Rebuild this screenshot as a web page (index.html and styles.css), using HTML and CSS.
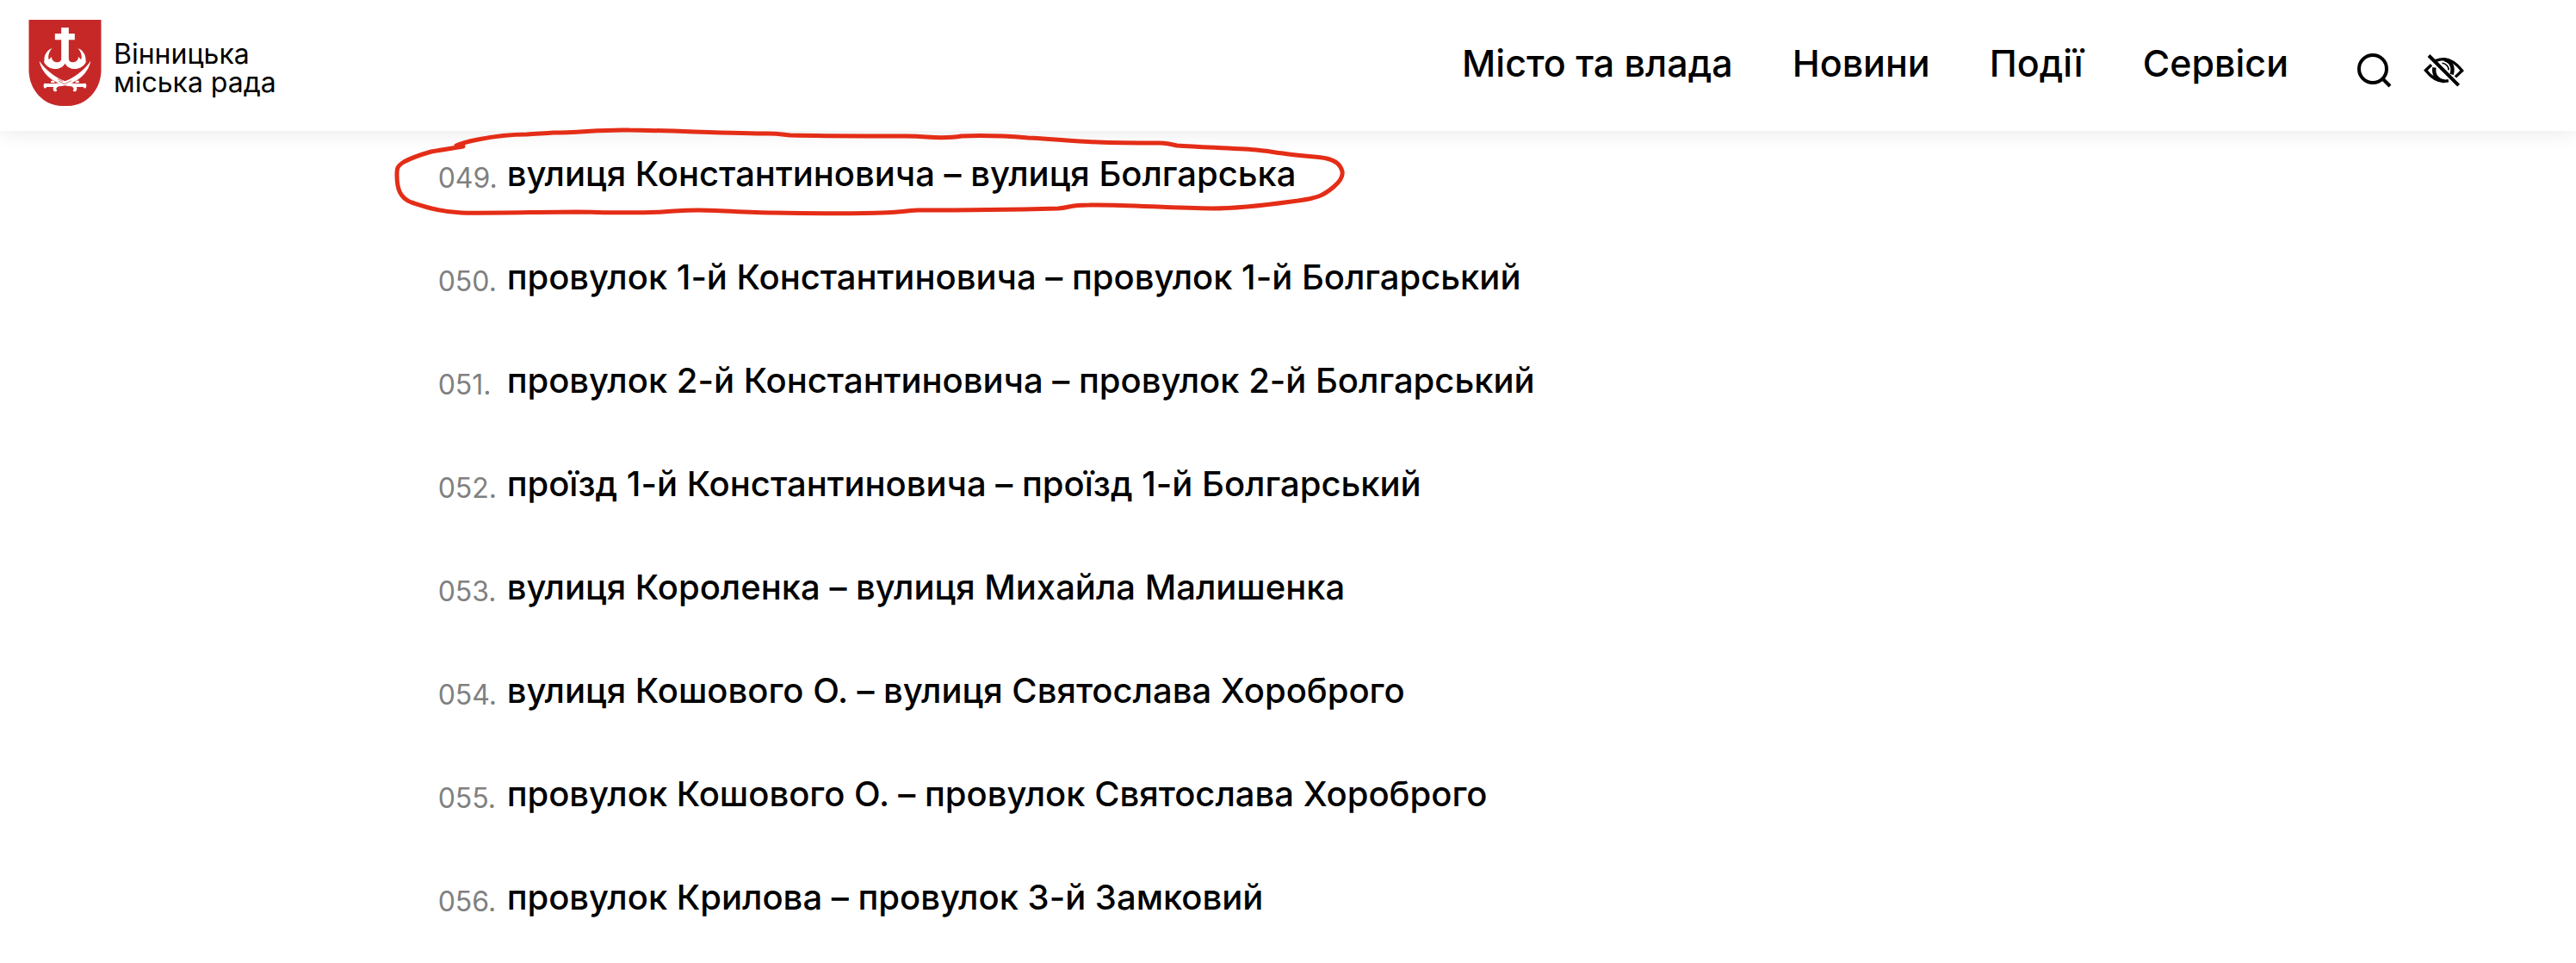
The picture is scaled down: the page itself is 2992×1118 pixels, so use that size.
FILE: index.html
```html
<!DOCTYPE html>
<html lang="uk">
<head>
<meta charset="utf-8">
<meta name="viewport" content="width=device-width, initial-scale=1">
<title>Вінницька міська рада</title>
<link rel="stylesheet" href="styles.css">
</head>
<body>
<header class="header">
  <a class="brand" href="#">
    <svg class="brand-shield" viewBox="40 24 252 300" aria-hidden="true">
      <path fill="#c62828" d="M40 24H292V199C292 270 238 324 178 324H154C94 324 40 270 40 199Z"/>
      <g fill="#fff">
        <path d="M153 51H179V72H200V94H179V160C179 168 185 172 192 172C205 171 214 163 212 152L222 163C227 150 221 134 211 123C230 130 239 148 238 163L239 172C231 187 217 194 204 195C186 196 172 188 166 176C160 188 146 196 128 195C115 194 101 187 93 172L94 163C93 148 102 130 121 123C111 134 105 150 110 163L120 152C118 163 127 171 140 172C147 172 153 168 153 160V94H131V72H153Z"/>
        <path d="M77 168C96 195 123 218 155 233C183 246 211 248 237 245C243 249 241 261 235 263L229 258L206 258C210 267 205 275 198 274C192 271 194 267 197 266C195 260 192 257 188 256C130 249 88 216 77 170Z"/>
        <path d="M255 168C236 195 209 218 177 233C149 246 121 248 95 245C89 249 91 261 97 263L103 258L126 258C122 267 127 275 134 274C140 271 138 267 135 266C137 260 140 257 144 256C202 249 244 216 255 170Z"/>
        <path d="M117 243C115 236 121 233 128 237L131 244ZM215 243C217 236 211 233 204 237L201 244Z"/>
      </g>
      <path fill="none" stroke="#c62828" stroke-width="2" d="M144 237L164 248L188 236M141 230L158 238"/>
    </svg>
    <span class="brand-name"><span>Вінницька</span><span>міська рада</span></span>
  </a>
  <div class="header-right">
    <nav class="nav">
      <a href="#">Місто та влада</a>
      <a href="#">Новини</a>
      <a href="#">Події</a>
      <a href="#">Сервіси</a>
    </nav>
    <div class="tools">
      <button class="tool" type="button" aria-label="Пошук">
        <svg viewBox="0 0 40 40"><g fill="none" stroke="#000" stroke-width="4"><circle cx="18" cy="18" r="16"/><path d="M29 29L38 38"/></g></svg>
      </button>
      <button class="tool tool-eye" type="button" aria-label="Версія для людей з порушенням зору">
        <svg viewBox="285 44 140 116"><g fill="none" stroke="#000"><path stroke-width="10" d="M312 82L292 101C314 128 335 139 355 139L371 137M323 69C334 65 345 62 355 62C380 63 400 79 418 102L395 124"/><path stroke-width="13" d="M322 91C318 117 332 134 357 139M357 64C381 70 390 91 382 115"/><path stroke-width="5" d="M349 76C364 77 373 90 371 100"/><path stroke-width="12" d="M303 50L406 153"/></g></svg>
      </button>
    </div>
  </div>
</header>
<main class="content">
  <ol class="streets">
    <li><span class="num">049.</span><span>вулиця Константиновича – вулиця Болгарська</span>
      <svg class="mark" viewBox="456 146 1108 108" aria-hidden="true"><path d="M530 169L538 170C532 171 519 173 501 176C487 180 478 183 469 188C461 193 461 196 461 203C461 218 464 230 478 235C494 240 511 246 536 247C555 248 635 246 670 246C710 247 750 247 769 246C787 245 793 244 811 244C835 244 867 247 899 247C935 248 985 248 1025 247C1044 247 1048 245 1066 244C1100 244 1190 243 1229 242C1243 241 1241 238 1265 238C1305 237 1361 242 1408 242C1441 242 1471 238 1500 234C1532 230 1537 227 1549 217C1556 211 1560 204 1559 199C1557 191 1552 187 1541 184C1524 181 1507 181 1490 178C1475 176 1469 175 1459 174C1431 172 1399 171 1367 169C1359 167 1354 166 1347 166C1325 166 1298 166 1275 165C1247 164 1218 161 1194 160C1169 158 1142 157 1117 158C1105 160 1090 160 1076 159C1064 158 1059 158 1051 158C1010 158 959 158 918 157C908 156 904 155 892 155C856 155 763 151 731 151C700 150 673 154 643 154C629 155 621 155 612 156C599 156 575 158 555 162C540 165 534 167 530 169"/></svg>
    </li>
    <li><span class="num">050.</span><span>провулок 1-й Константиновича – провулок 1-й Болгарський</span></li>
    <li><span class="num">051.</span><span>провулок 2-й Константиновича – провулок 2-й Болгарський</span></li>
    <li><span class="num">052.</span><span>проїзд 1-й Константиновича – проїзд 1-й Болгарський</span></li>
    <li><span class="num">053.</span><span>вулиця Короленка – вулиця Михайла Малишенка</span></li>
    <li><span class="num">054.</span><span>вулиця Кошового О. – вулиця Святослава Хороброго</span></li>
    <li><span class="num">055.</span><span>провулок Кошового О. – провулок Святослава Хороброго</span></li>
    <li><span class="num">056.</span><span>провулок Крилова – провулок 3-й Замковий</span></li>
  </ol>
</main>
</body>
</html>
```
FILE: styles.css
```css
* {
  box-sizing: border-box;
}

body {
  margin: 0;
  background: #fff;
  color: #000;
  font-family: Inter, "Noto Sans", sans-serif;
}

a {
  color: inherit;
  text-decoration: none;
}

.header {
  display: flex;
  align-items: center;
  justify-content: space-between;
  padding: 0 130px 6px 33px;
  min-height: 152px;
  background: #fff;
  box-shadow: 0 0 24px rgba(0, 0, 0, 0.1);
}

.brand {
  display: flex;
  align-items: center;
  gap: 14px;
}

.brand-shield {
  width: 85px;
  height: 100px;
}

.brand-name {
  display: flex;
  flex-direction: column;
  padding-top: 12px;
  font-size: 32px;
  line-height: 33px;
}

.header-right {
  display: flex;
  align-items: center;
  gap: 80px;
}

.nav {
  display: flex;
  gap: 69px;
  font-size: 43px;
  font-weight: 500;
  line-height: 52px;
}

.tools {
  display: flex;
  align-items: center;
  gap: 37px;
  padding-top: 18px;
}

.tool {
  display: flex;
  padding: 0;
  border: 0;
  background: none;
  cursor: pointer;
}

.tool svg {
  width: 40px;
  height: 40px;
}

.tool-eye svg {
  width: 47px;
}

.content {
  padding: 20px 17% 0;
}

.streets {
  display: flex;
  flex-direction: column;
  gap: 50px;
  margin: 0;
  padding: 0;
  list-style: none;
  font-size: 40px;
  font-weight: 500;
  line-height: 60px;
}

.streets li {
  position: relative;
  display: flex;
  align-items: flex-start;
}

.num {
  flex: 0 0 80px;
  color: #808080;
  font-size: 32px;
  font-weight: 400;
  line-height: 70px;
}

.mark {
  position: absolute;
  top: -26px;
  left: -53px;
  width: 1108px;
  height: 108px;
  fill: none;
  stroke: #e42d17;
  stroke-width: 5;
  stroke-linecap: round;
  stroke-linejoin: round;
  pointer-events: none;
}
```
